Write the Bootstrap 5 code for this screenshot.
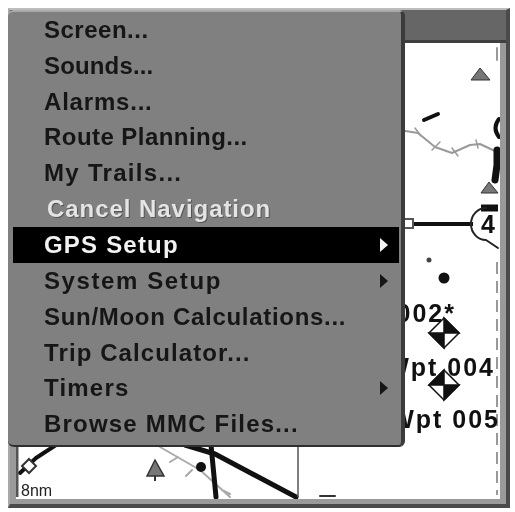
<!DOCTYPE html>
<html lang="en">
<head>
<meta charset="utf-8">
<title>GPS Menu</title>
<link href="https://cdn.jsdelivr.net/npm/bootstrap@5.3.0/dist/css/bootstrap.min.css" rel="stylesheet">
<style>
html,body{background:#fff;width:515px;height:512px;overflow:hidden}
.shot-wrap{padding:8px 5px 4px 8px;filter:blur(.65px)}
.unit{width:502px;height:500px;background:#9a9a9a;border-top:2px solid #bdbdbd;border-right:4px solid #4a4a4a;border-bottom:4px solid #4a4a4a;border-left:2px solid #a8a8a8}
.title-strip{height:33px;background:#666;border-bottom:3px solid #3f3f3f;flex:none}
.map-view{margin:0 6px 5px 6px;background:#fff;flex:1 1 auto;min-height:0;overflow:hidden}
.map-view svg{display:block;width:100%;height:100%}
.map-label{font-family:"Liberation Sans",sans-serif;font-weight:700;font-size:25px;letter-spacing:2px;fill:#111;text-anchor:end}
.map-small{font-family:"Liberation Sans",sans-serif;font-size:16px;fill:#222}
.menu-panel{top:0;left:-2px;width:397px;height:437px;background:#808080;border-right:4px solid #3b3b3b;border-bottom:2px solid #2f2f2f;border-top:2px solid #aaa;padding:0 2px 0 5px}
.menu-row{height:35.85px;padding:0 11px 0 31px;background:transparent;border:0;border-radius:0;color:#161616;font-family:"Liberation Sans",sans-serif;font-weight:700;font-size:24px;letter-spacing:.7px;line-height:1}
.menu-row.is-off{color:#e4e4e4;padding-left:34px;text-shadow:1px 1px 0 #555}
.menu-row.is-on{background:#000;color:#f2f2f2;margin:0}
.menu-row.sp-15{letter-spacing:.15px}
.menu-row.sp-45{letter-spacing:.45px}
.menu-row.sp-50{letter-spacing:.5px}
.menu-row.sp-80{letter-spacing:.8px}
.menu-row.sp-95{letter-spacing:.95px}
.menu-row.sp-110{letter-spacing:1.1px}
.menu-row.sp-120{letter-spacing:1.2px}
.menu-row.sp-130{letter-spacing:1.3px}
.menu-row.sp-160{letter-spacing:1.6px}
.sub-arrow{width:0;height:0;border-top:7px solid transparent;border-bottom:7px solid transparent;border-left:8px solid currentColor;flex:none}
</style>
</head>
<body class="m-0">
<div class="shot-wrap">
  <div class="unit position-relative d-flex flex-column">
    <div class="title-strip"></div>
    <div class="map-view">
      <svg viewBox="16 43 484 456" preserveAspectRatio="none" role="img" aria-label="Map">
        <g fill="none" stroke-linecap="round" stroke-linejoin="round">
          <path d="M405 131L418 133L435 147L452 153L470 145L480 144L497 152" stroke="#9a9a9a" stroke-width="2"/>
          <path d="M415 128l6 8M432 150l8-8M452 148l6 8M476 140l2 8" stroke="#9a9a9a" stroke-width="1.5"/>
          <path d="M160 447L200 470L230 497M170 462l8-5M192 470l-6 6M222 490l8 4" stroke="#aaa" stroke-width="2"/>
          <path d="M424 120L438 114" stroke="#111" stroke-width="4"/>
          <path d="M499 119Q492 128 499 137" stroke="#111" stroke-width="4"/>
          <path d="M497 150V165L495 180" stroke="#111" stroke-width="7"/>
          <path d="M410 224H473" stroke="#111" stroke-width="4" stroke-linecap="butt"/>
          <path d="M481 208H498" stroke="#111" stroke-width="7" stroke-linecap="butt"/>
          <path d="M497 60v-12" stroke="#999" stroke-width="2"/>
          <path d="M497 262V495" stroke="#999" stroke-width="2" stroke-dasharray="12 7" stroke-linecap="butt"/>
          <path d="M20 473L36 458L56 445" stroke="#111" stroke-width="4"/>
          <path d="M185 445L215 454L296 497" stroke="#111" stroke-width="5"/>
          <path d="M211 445L216 497" stroke="#111" stroke-width="5"/>
          <path d="M298 447V497" stroke="#555" stroke-width="1.5" stroke-linecap="butt"/>
          <path d="M17 447V497" stroke="#555" stroke-width="3" stroke-linecap="butt"/>
          <path d="M320 496H335" stroke="#333" stroke-width="2"/>
          <path d="M486 208A15 16 0 0 0 486 240L498 248" stroke="#222" stroke-width="2"/>
        </g>
        <rect x="404" y="219" width="9" height="9" fill="#fff" stroke="#555" stroke-width="2"/>
        <path d="M29 459l7 7-7 7-7-7z" fill="#fff" stroke="#333" stroke-width="2"/>
        <path d="M471 80L480 68L490 80z" fill="#777" stroke="#333"/>
        <path d="M481 193L489 182L498 193z" fill="#777" stroke="#333"/>
        <path d="M147 476L155 460L164 476z" fill="#777" stroke="#333" stroke-width="1.5"/>
        <path d="M155 476v5" stroke="#333" stroke-width="2"/>
        <circle cx="201" cy="467" r="5" fill="#111"/>
        <circle cx="429" cy="260" r="2.5" fill="#444"/>
        <circle cx="444" cy="278" r="5.5" fill="#111"/>
        <g stroke="#111" stroke-width="1.5">
          <path d="M444 318L459 333L444 348L429 333z" fill="#fff"/>
          <path d="M444 318L459 333H444z M444 348L429 333H444z" fill="#111"/>
        </g>
        <g stroke="#111" stroke-width="1.5">
          <path d="M444 370L459 385L444 400L429 385z" fill="#fff"/>
          <path d="M444 370L429 385H444z M444 400L459 385H444z" fill="#111"/>
        </g>
        <text class="map-label" x="456" y="322">002*</text>
        <text class="map-label" x="495" y="376">Wpt 004</text>
        <text class="map-label" x="500" y="428">Wpt 005</text>
        <text class="map-label" x="497" y="233">4</text>
        <text class="map-small" x="21" y="496">8nm</text>
      </svg>
    </div>
    <div class="menu-panel position-absolute list-group">
      <div class="menu-row sp-50 list-group-item d-flex align-items-center">Screen...</div>
      <div class="menu-row sp-15 list-group-item d-flex align-items-center">Sounds...</div>
      <div class="menu-row sp-80 list-group-item d-flex align-items-center">Alarms...</div>
      <div class="menu-row sp-45 list-group-item d-flex align-items-center">Route Planning...</div>
      <div class="menu-row sp-130 list-group-item d-flex align-items-center">My Trails...</div>
      <div class="menu-row is-off sp-95 list-group-item d-flex align-items-center">Cancel Navigation</div>
      <div class="menu-row is-on sp-120 list-group-item d-flex align-items-center justify-content-between">GPS Setup<span class="sub-arrow"></span></div>
      <div class="menu-row sp-160 list-group-item d-flex align-items-center justify-content-between">System Setup<span class="sub-arrow"></span></div>
      <div class="menu-row list-group-item d-flex align-items-center">Sun/Moon Calculations...</div>
      <div class="menu-row sp-110 list-group-item d-flex align-items-center">Trip Calculator...</div>
      <div class="menu-row sp-120 list-group-item d-flex align-items-center justify-content-between">Timers<span class="sub-arrow"></span></div>
      <div class="menu-row sp-120 list-group-item d-flex align-items-center">Browse MMC Files...</div>
    </div>
  </div>
</div>
</body>
</html>
